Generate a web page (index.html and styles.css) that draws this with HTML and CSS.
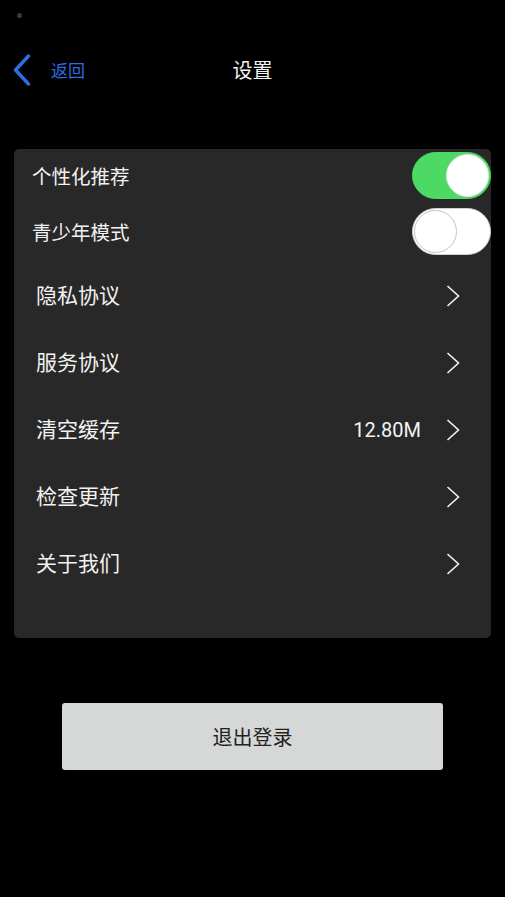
FILE: index.html
```html
<!DOCTYPE html>
<html lang="zh-CN">
<head>
    <meta charset="UTF-8">
    <meta name="viewport" content="width=device-width, initial-scale=1.0">
    <title>设置</title>
    <link rel="stylesheet" href="styles.css">
</head>
<body>
    <div class="status-bar">
        <span class="camera-dot"></span>
    </div>

    <div class="navbar">
        <a class="back-link" href="#">
            <svg class="back-icon" width="18" height="32" viewBox="0 0 18 32">
                <polyline points="15.5,2 2.5,16 15.5,30" fill="none" stroke="#2c6fe0" stroke-width="3.4" stroke-linecap="round" stroke-linejoin="round"/>
            </svg>
            <span>返回</span>
        </a>
        <h1 class="title">设置</h1>
    </div>

    <div class="settings-card">
        <div class="toggle-row">
            <span class="label">个性化推荐</span>
            <span class="switch on"><span class="knob"></span></span>
        </div>
        <div class="toggle-row">
            <span class="label">青少年模式</span>
            <span class="switch"><span class="knob"></span></span>
        </div>

        <div class="link-row">
            <span class="label">隐私协议</span>
            <span class="chevron"></span>
        </div>
        <div class="link-row">
            <span class="label">服务协议</span>
            <span class="chevron"></span>
        </div>
        <div class="link-row">
            <span class="label">清空缓存</span>
            <span class="value">12.80M</span>
            <span class="chevron"></span>
        </div>
        <div class="link-row">
            <span class="label">检查更新</span>
            <span class="chevron"></span>
        </div>
        <div class="link-row">
            <span class="label">关于我们</span>
            <span class="chevron"></span>
        </div>
    </div>

    <button class="logout-btn">退出登录</button>

    <template id="chevron-tpl">
        <svg width="14" height="22" viewBox="0 0 14 22">
            <polyline points="1.5,1 12.5,11 1.5,21" fill="none" stroke="#f2f2f2" stroke-width="1.6" stroke-linejoin="miter"/>
        </svg>
    </template>

    <script>
        document.addEventListener("DOMContentLoaded", function() {
            const tpl = document.getElementById("chevron-tpl");
            document.querySelectorAll(".chevron").forEach(function(el) {
                el.appendChild(tpl.content.cloneNode(true));
            });
        });
    </script>
</body>
</html>
```

FILE: styles.css
```css
body {
    font-family: "Noto Sans CJK SC", Roboto, "Noto Sans", sans-serif;
    background-color: #000;
    color: #f2f2f2;
    margin: 0;
    padding: 0;
}

.status-bar {
    height: 30px;
    padding-left: 17px;
    display: flex;
    align-items: center;
}

.camera-dot {
    width: 5px;
    height: 5px;
    border-radius: 50%;
    background-color: #3a3a3a;
}

.navbar {
    height: 80px;
    display: flex;
    align-items: center;
    justify-content: center;
    position: relative;
}

.back-link {
    position: absolute;
    left: 13px;
    top: 24px;
    display: flex;
    align-items: center;
    gap: 20px;
    color: #2c6fe0;
    text-decoration: none;
    font-size: 17px;
}

.back-link span {
    padding-bottom: 2px;
}

.back-icon {
    display: block;
}

.title {
    margin: 0 0 2px 0;
    font-size: 20px;
    font-weight: normal;
    color: #f4f4f4;
}

.settings-card {
    margin: 39px 14px 0 14px;
    padding: 2px 0 41px 0;
    background-color: #282828;
    border-radius: 5px;
}

.toggle-row {
    height: 48px;
    margin-bottom: 8px;
    padding-left: 18px;
    display: flex;
    align-items: center;
    justify-content: space-between;
}

.toggle-row .label {
    font-size: 19.5px;
    padding-top: 1px;
}

.switch {
    width: 79px;
    height: 47px;
    border-radius: 24px;
    box-sizing: border-box;
    background-color: #fff;
    border: 1px solid #d0d0d0;
    position: relative;
}

.switch .knob {
    position: absolute;
    top: 1px;
    left: 1px;
    width: 43px;
    height: 43px;
    box-sizing: border-box;
    border-radius: 50%;
    background-color: #fff;
    border: 1px solid #c4c4c4;
}

.switch.on {
    background-color: #4cd964;
    border-color: #4cd964;
}

.switch.on .knob {
    left: auto;
    right: 1px;
    border-color: #e8e8e8;
}

.toggle-row + .link-row {
    margin-top: -1px;
}

.link-row {
    height: 67px;
    padding: 0 31px 0 22px;
    display: flex;
    align-items: center;
}

.link-row .label {
    flex: 1;
    font-size: 21px;
    padding-bottom: 3px;
}

.value {
    font-family: Roboto, "Noto Sans", sans-serif;
    font-size: 20px;
    margin-right: 25px;
}

.chevron svg {
    display: block;
}

.logout-btn {
    display: block;
    margin: 65px auto 0 auto;
    width: 381px;
    height: 67px;
    background-color: #d6d8d7;
    color: #222;
    border: none;
    border-radius: 3px;
    font-family: "Noto Sans CJK SC", sans-serif;
    font-size: 20px;
    cursor: pointer;
}
```
